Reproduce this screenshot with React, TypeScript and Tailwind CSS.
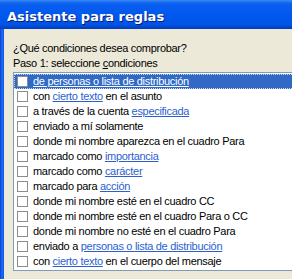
import React from "react";

type Part = { t: string; link?: boolean };

const rows: Part[][] = [
  [{ t: "de personas o lista de distribución", link: true }],
  [{ t: "con " }, { t: "cierto texto", link: true }, { t: " en el asunto" }],
  [{ t: "a través de la cuenta " }, { t: "especificada", link: true }],
  [{ t: "enviado a mí solamente" }],
  [{ t: "donde mi nombre aparezca en el cuadro Para" }],
  [{ t: "marcado como " }, { t: "importancia", link: true }],
  [{ t: "marcado como " }, { t: "carácter", link: true }],
  [{ t: "marcado para " }, { t: "acción", link: true }],
  [{ t: "donde mi nombre esté en el cuadro CC" }],
  [{ t: "donde mi nombre esté en el cuadro Para o CC" }],
  [{ t: "donde mi nombre no esté en el cuadro Para" }],
  [{ t: "enviado a " }, { t: "personas o lista de distribución", link: true }],
  [{ t: "con " }, { t: "cierto texto", link: true }, { t: " en el cuerpo del mensaje" }],
];

export default function App() {
  return (
    <div
      className="w-[292px] h-[279px] flex flex-col overflow-hidden bg-[#ece9d8] text-black"
      style={{ fontFamily: '"Liberation Sans", Arial, sans-serif' }}
    >
      <div className="h-[29px] shrink-0 flex items-center pl-[7px] bg-[linear-gradient(to_bottom,#3d8cf5_0px,#1d6ff2_2px,#0a5ff0_4px,#0058ee_50%,#0053e6_85%,#0047d0_93%,#003cb8_100%)]">
        <span
          className="text-white font-bold text-[13px] leading-none pt-[4px] [text-shadow:1px_1px_0_#0a1e6e]"
          style={{ fontFamily: '"DejaVu Sans", sans-serif' }}
        >
          Asistente para reglas
        </span>
      </div>
      <div className="flex-1 flex min-h-0">
        <div className="w-[4px] shrink-0 bg-[linear-gradient(to_right,#0a3fcf,#1f6ef2_50%,#0b55e8)]" />
        <div className="flex-1 min-w-0 pl-[9px] pt-[12px] text-[11px] leading-[15px] tracking-[-0.3px]">
          <div>¿Qué condiciones desea comprobar?</div>
          <div>
            Paso 1: seleccione <span className="underline">c</span>ondiciones
          </div>
          <div className="mt-[1px] w-[300px] border border-[#7f9db9] bg-white pt-[1px] pb-[1px]">
            {rows.map((parts, i) => {
              const sel = i === 0;
              return (
                <div
                  key={i}
                  className={
                    "h-[15px] flex items-center whitespace-nowrap " +
                    (sel ? "bg-[#316ac5] text-white outline outline-1 outline-dotted outline-[#c9d6ee] -outline-offset-1" : "")
                  }
                >
                  <div className="ml-[3px] w-[11px] h-[11px] shrink-0 border border-[#8c8c8c] bg-white" />
                  <div className="ml-[5px]">
                    {parts.map((p, j) =>
                      p.link ? (
                        <span
                          key={j}
                          className={"underline " + (sel ? "text-white" : "text-[#2c5fcf]")}
                        >
                          {p.t}
                        </span>
                      ) : (
                        <span key={j}>{p.t}</span>
                      )
                    )}
                  </div>
                </div>
              );
            })}
          </div>
        </div>
      </div>
    </div>
  );
}
